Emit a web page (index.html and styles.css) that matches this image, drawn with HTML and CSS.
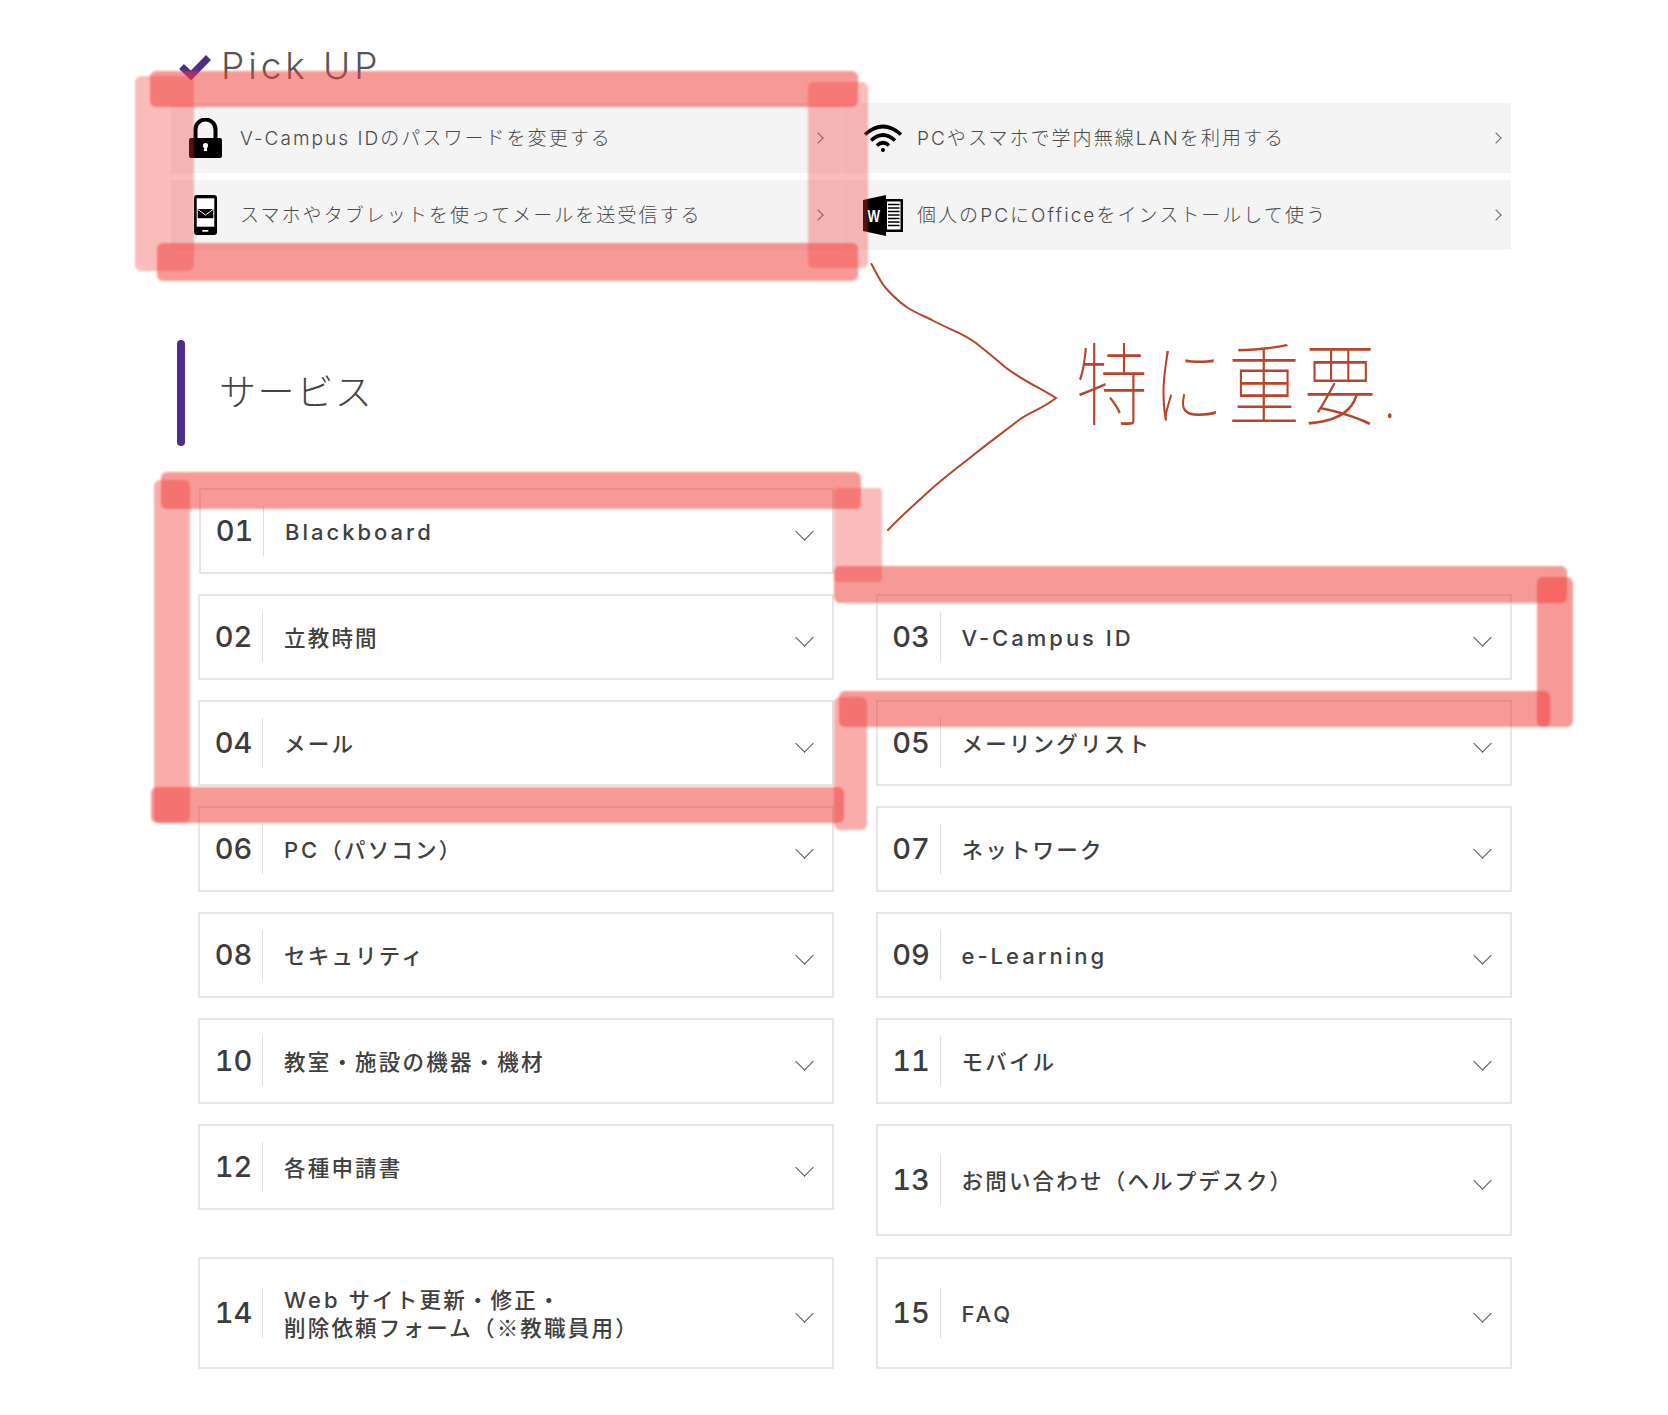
FILE: index.html
```html
<!DOCTYPE html>
<html lang="ja">
<head>
<meta charset="utf-8">
<title>Pick UP / サービス</title>
<link rel="stylesheet" href="styles.css">
</head>
<body>
<div class="page">
  <section class="pick">
    <h2 class="pick-head">
      <svg class="check" viewBox="0 0 32 26"><path d="M2.5 12.5 L12 21.5 L29.5 3.5"/></svg>
      <span>Pick UP</span>
    </h2>
    <div class="pick-grid">
      <a class="pick-item">
        <span class="pick-icon">
          <svg width="33" height="40" viewBox="0 0 33 40"><path d="M6.5 21V11.5a10 10 0 0 1 20 0V21" fill="none" stroke="#000" stroke-width="4"/><rect y="20" width="33" height="20" rx="2"/><circle cx="16.5" cy="27.5" r="2.6" fill="#fff"/><path d="M15.5 28h2l.7 5h-3.4z" fill="#fff"/></svg>
        </span>
        <span class="pick-text">V-Campus IDのパスワードを変更する</span>
        <i class="pick-arrow"></i>
      </a>
      <a class="pick-item right">
        <span class="pick-icon">
          <svg width="40" height="28" viewBox="0 0 40 28" fill="none" stroke="#000" stroke-width="3.6"><path d="M2 10.5 Q20 -5.5 38 10.5"/><path d="M8 16.5 Q20 5.5 32 16.5"/><path d="M14 21.5 Q20 16 26 21.5"/><circle cx="20" cy="26" r="2" fill="#000" stroke="none"/></svg>
        </span>
        <span class="pick-text">PCやスマホで学内無線LANを利用する</span>
        <i class="pick-arrow"></i>
      </a>
      <a class="pick-item">
        <span class="pick-icon">
          <svg width="23" height="40" viewBox="0 0 23 40"><rect width="23" height="40" rx="3"/><rect x="2.7" y="3.3" width="17.6" height="28.4" fill="#fff"/><rect x="3.7" y="14" width="15.6" height="9.2"/><path d="M4 14.5 L11.5 20 L19 14.5" fill="none" stroke="#fff" stroke-width="1"/><rect x="8.3" y="35" width="6" height="1.7" fill="#fff"/></svg>
        </span>
        <span class="pick-text">スマホやタブレットを使ってメールを送受信する</span>
        <i class="pick-arrow"></i>
      </a>
      <a class="pick-item right">
        <span class="pick-icon">
          <svg width="40" height="41" viewBox="0 0 40 41"><rect x="21" y="4" width="19" height="33"/><rect x="24" y="6.5" width="13.5" height="28" fill="#fff"/><path d="M25 9.5h11.5M25 13h11.5M25 16.5h11.5M25 20h11.5M25 23.5h11.5M25 27h11.5M25 30.5h11.5" stroke="#000" stroke-width="1.7"/><path d="M0 5 L23 0 V41 L0 36z"/><text class="word-w" x="4.5" y="26.5" textLength="12.5" lengthAdjust="spacingAndGlyphs">W</text></svg>
        </span>
        <span class="pick-text">個人のPCにOfficeをインストールして使う</span>
        <i class="pick-arrow"></i>
      </a>
    </div>
  </section>

  <section class="service">
    <h2 class="service-head"><span class="service-title">サービス</span></h2>
    <div class="card-grid">
      <a class="card first nudge"><span class="num">01</span><span class="label"><span class="lat">Blackboard</span></span><i class="chev"></i></a>
      <a class="card first"><span class="num">02</span><span class="label">立教時間</span><i class="chev"></i></a>
      <a class="card"><span class="num">03</span><span class="label"><span class="lat">V-Campus ID</span></span><i class="chev"></i></a>
      <a class="card"><span class="num">04</span><span class="label">メール</span><i class="chev"></i></a>
      <a class="card"><span class="num">05</span><span class="label">メーリングリスト</span><i class="chev"></i></a>
      <a class="card"><span class="num">06</span><span class="label"><span class="lat">PC</span>（パソコン）</span><i class="chev"></i></a>
      <a class="card"><span class="num">07</span><span class="label">ネットワーク</span><i class="chev"></i></a>
      <a class="card"><span class="num">08</span><span class="label">セキュリティ</span><i class="chev"></i></a>
      <a class="card"><span class="num">09</span><span class="label"><span class="lat">e-Learning</span></span><i class="chev"></i></a>
      <a class="card"><span class="num">10</span><span class="label">教室・施設の機器・機材</span><i class="chev"></i></a>
      <a class="card"><span class="num">11</span><span class="label">モバイル</span><i class="chev"></i></a>
      <a class="card"><span class="num">12</span><span class="label">各種申請書</span><i class="chev"></i></a>
      <a class="card tall"><span class="num">13</span><span class="label">お問い合わせ（ヘルプデスク）</span><i class="chev"></i></a>
      <a class="card tall"><span class="num">14</span><span class="label"><span class="lat">Web</span> サイト更新・修正・<br>削除依頼フォーム（<span class="cjk">※</span>教職員用）</span><i class="chev"></i></a>
      <a class="card tall"><span class="num">15</span><span class="label"><span class="lat">FAQ</span></span><i class="chev"></i></a>
    </div>
  </section>

  <svg class="annot" viewBox="0 0 1668 1415">
    <g class="hl">
      <rect class="soft" x="135" y="76" width="59" height="195" rx="6"/>
      <rect class="soft" x="808" y="82" width="60" height="186" rx="6"/>
      <rect class="strong" x="150" y="71" width="708" height="36" rx="6"/>
      <rect class="strong" x="157" y="243" width="701" height="38" rx="6"/>
      <rect class="soft2" x="154" y="480" width="36" height="343" rx="6"/>
      <rect class="soft" x="834" y="488" width="48" height="94" rx="4"/>
      <rect class="soft2" x="834" y="697" width="33" height="133" rx="6"/>
      <rect class="strong" x="161" y="472" width="700" height="37" rx="6"/>
      <rect class="strong" x="151" y="787" width="693" height="36" rx="6"/>
      <rect class="strong" x="834" y="566" width="733" height="37" rx="6"/>
      <rect class="strong" x="1537" y="577" width="36" height="150" rx="6"/>
      <rect class="strong" x="839" y="691" width="711" height="36" rx="6"/>
    </g>
    <path class="ink" d="M871.5 264 C878 276 881 284 888.5 291 C895 298 902 304 908 308 C916 313 924 316 932 320 C948 329 963 333 976 343 C986 351 995 358 1005 367 C1020 379 1040 388 1056 398 C1042 409 1030 412 1019 420 C1005 431 991 441 976 453 C960 466 943 478 927 493 C913 506 900 517 888 530"/>
  </svg>
  <div class="note">特に重要.</div>
</div>
</body>
</html>
```
FILE: styles.css
```css
* { box-sizing: border-box; }
html, body { margin: 0; padding: 0; background: #fff; }
body {
  font-family: Inter, "Noto Sans CJK JP", "Noto Sans", sans-serif;
  color: #444;
}
a { color: inherit; text-decoration: none; }
.cjk { font-family: "Noto Sans CJK JP", sans-serif; }

.page {
  position: relative;
  width: 1668px;
  height: 1415px;
  overflow: hidden;
  padding: 44px 157px 0 171px;
}

/* Pick UP */
.pick-head {
  display: flex;
  align-items: center;
  gap: 10px;
  height: 44px;
  margin: 0 0 15px 8px;
  font-size: 37px;
  font-weight: 300;
  letter-spacing: 3.9px;
  line-height: 44px;
  color: #555;
}
.check { width: 32px; height: 26px; margin-top: 1px; }
.check path { fill: none; stroke: #4f2d8f; stroke-width: 7; }

.pick-grid {
  display: grid;
  grid-template-columns: 670px 669px;
  column-gap: 1px;
  row-gap: 7px;
}
.pick-item {
  display: flex;
  align-items: center;
  height: 70px;
  padding: 0 19px 0 12px;
  background: #f4f4f4;
}
.pick-item.right { padding: 0 11px 0 19px; }
.pick-icon {
  display: flex;
  align-items: center;
  justify-content: center;
  flex: none;
  width: 44px;
  margin-right: 13px;
}
.pick-item.right .pick-icon { margin-right: 12px; }
.pick-text {
  flex: 1;
  padding-bottom: 3px;
  font-size: 19px;
  font-weight: 300;
  letter-spacing: 2.05px;
  color: #4a4a4a;
}
.pick-arrow {
  flex: none;
  width: 8px;
  height: 8px;
  border-top: 1.5px solid #666;
  border-right: 1.5px solid #666;
  transform: rotate(45deg);
}
.word-w {
  font-family: "Liberation Sans", sans-serif;
  font-size: 17px;
  font-weight: 700;
  fill: #fff;
}

/* サービス */
.service-head {
  display: flex;
  align-items: center;
  height: 106px;
  margin: 90px 0 42px 6px;
  font-size: 37px;
  font-weight: 300;
  letter-spacing: 1.6px;
  color: #444;
}
.service-head::before {
  content: "";
  flex: none;
  width: 8px;
  height: 106px;
  margin-right: 34px;
  border-radius: 4px;
  background: #4f2d8f;
}
.service-title { margin-bottom: 6px; }
.card-grid {
  display: grid;
  grid-template-columns: 636px 636px;
  column-gap: 41.5px;
  row-gap: 20px;
  align-items: start;
  margin-left: 27px;
}
.card {
  display: flex;
  align-items: center;
  height: 86px;
  border: 2px solid #e6e6e6;
  background: #fff;
}
.card.first { grid-column: 1; }
.card.nudge { margin-left: 1px; }
.card.tall { height: 112px; margin-bottom: 1px; }
.num {
  display: flex;
  align-items: center;
  justify-content: center;
  flex: none;
  width: 63px;
  height: 50px;
  padding: 0 0 2px 5px;
  border-right: 1px solid #ddd;
  font-size: 29px;
  font-weight: 500;
  font-variant-numeric: tabular-nums;
  color: #3c3c3c;
}
.label {
  flex: 1;
  padding: 2px 0 0 21px;
  font-size: 21.5px;
  font-weight: 500;
  letter-spacing: 2.2px;
  line-height: 26.5px;
  color: #404040;
}
.lat { font-size: 22px; letter-spacing: 3px; }
.chev {
  flex: none;
  width: 13px;
  height: 13px;
  margin: 0 21px 0 0;
  border-right: 1.5px solid #555;
  border-bottom: 1.5px solid #555;
  transform: rotate(45deg);
}

/* hand-drawn annotation layered over the page */
.annot {
  position: absolute;
  top: 0;
  left: 0;
  width: 1668px;
  height: 1415px;
  pointer-events: none;
}
.hl { filter: blur(1.2px); }
.strong { fill: rgba(240, 60, 55, .52); }
.soft { fill: rgba(240, 60, 55, .34); }
.soft2 { fill: rgba(240, 60, 55, .42); }
.ink { fill: none; stroke: #b5452b; stroke-width: 2; stroke-linecap: round; }
.note {
  position: absolute;
  top: 335px;
  left: 1076px;
  font-size: 72px;
  font-weight: 100;
  line-height: 100px;
  letter-spacing: 4px;
  color: #b5452b;
  white-space: nowrap;
  transform: scaleY(1.25);
}
```
